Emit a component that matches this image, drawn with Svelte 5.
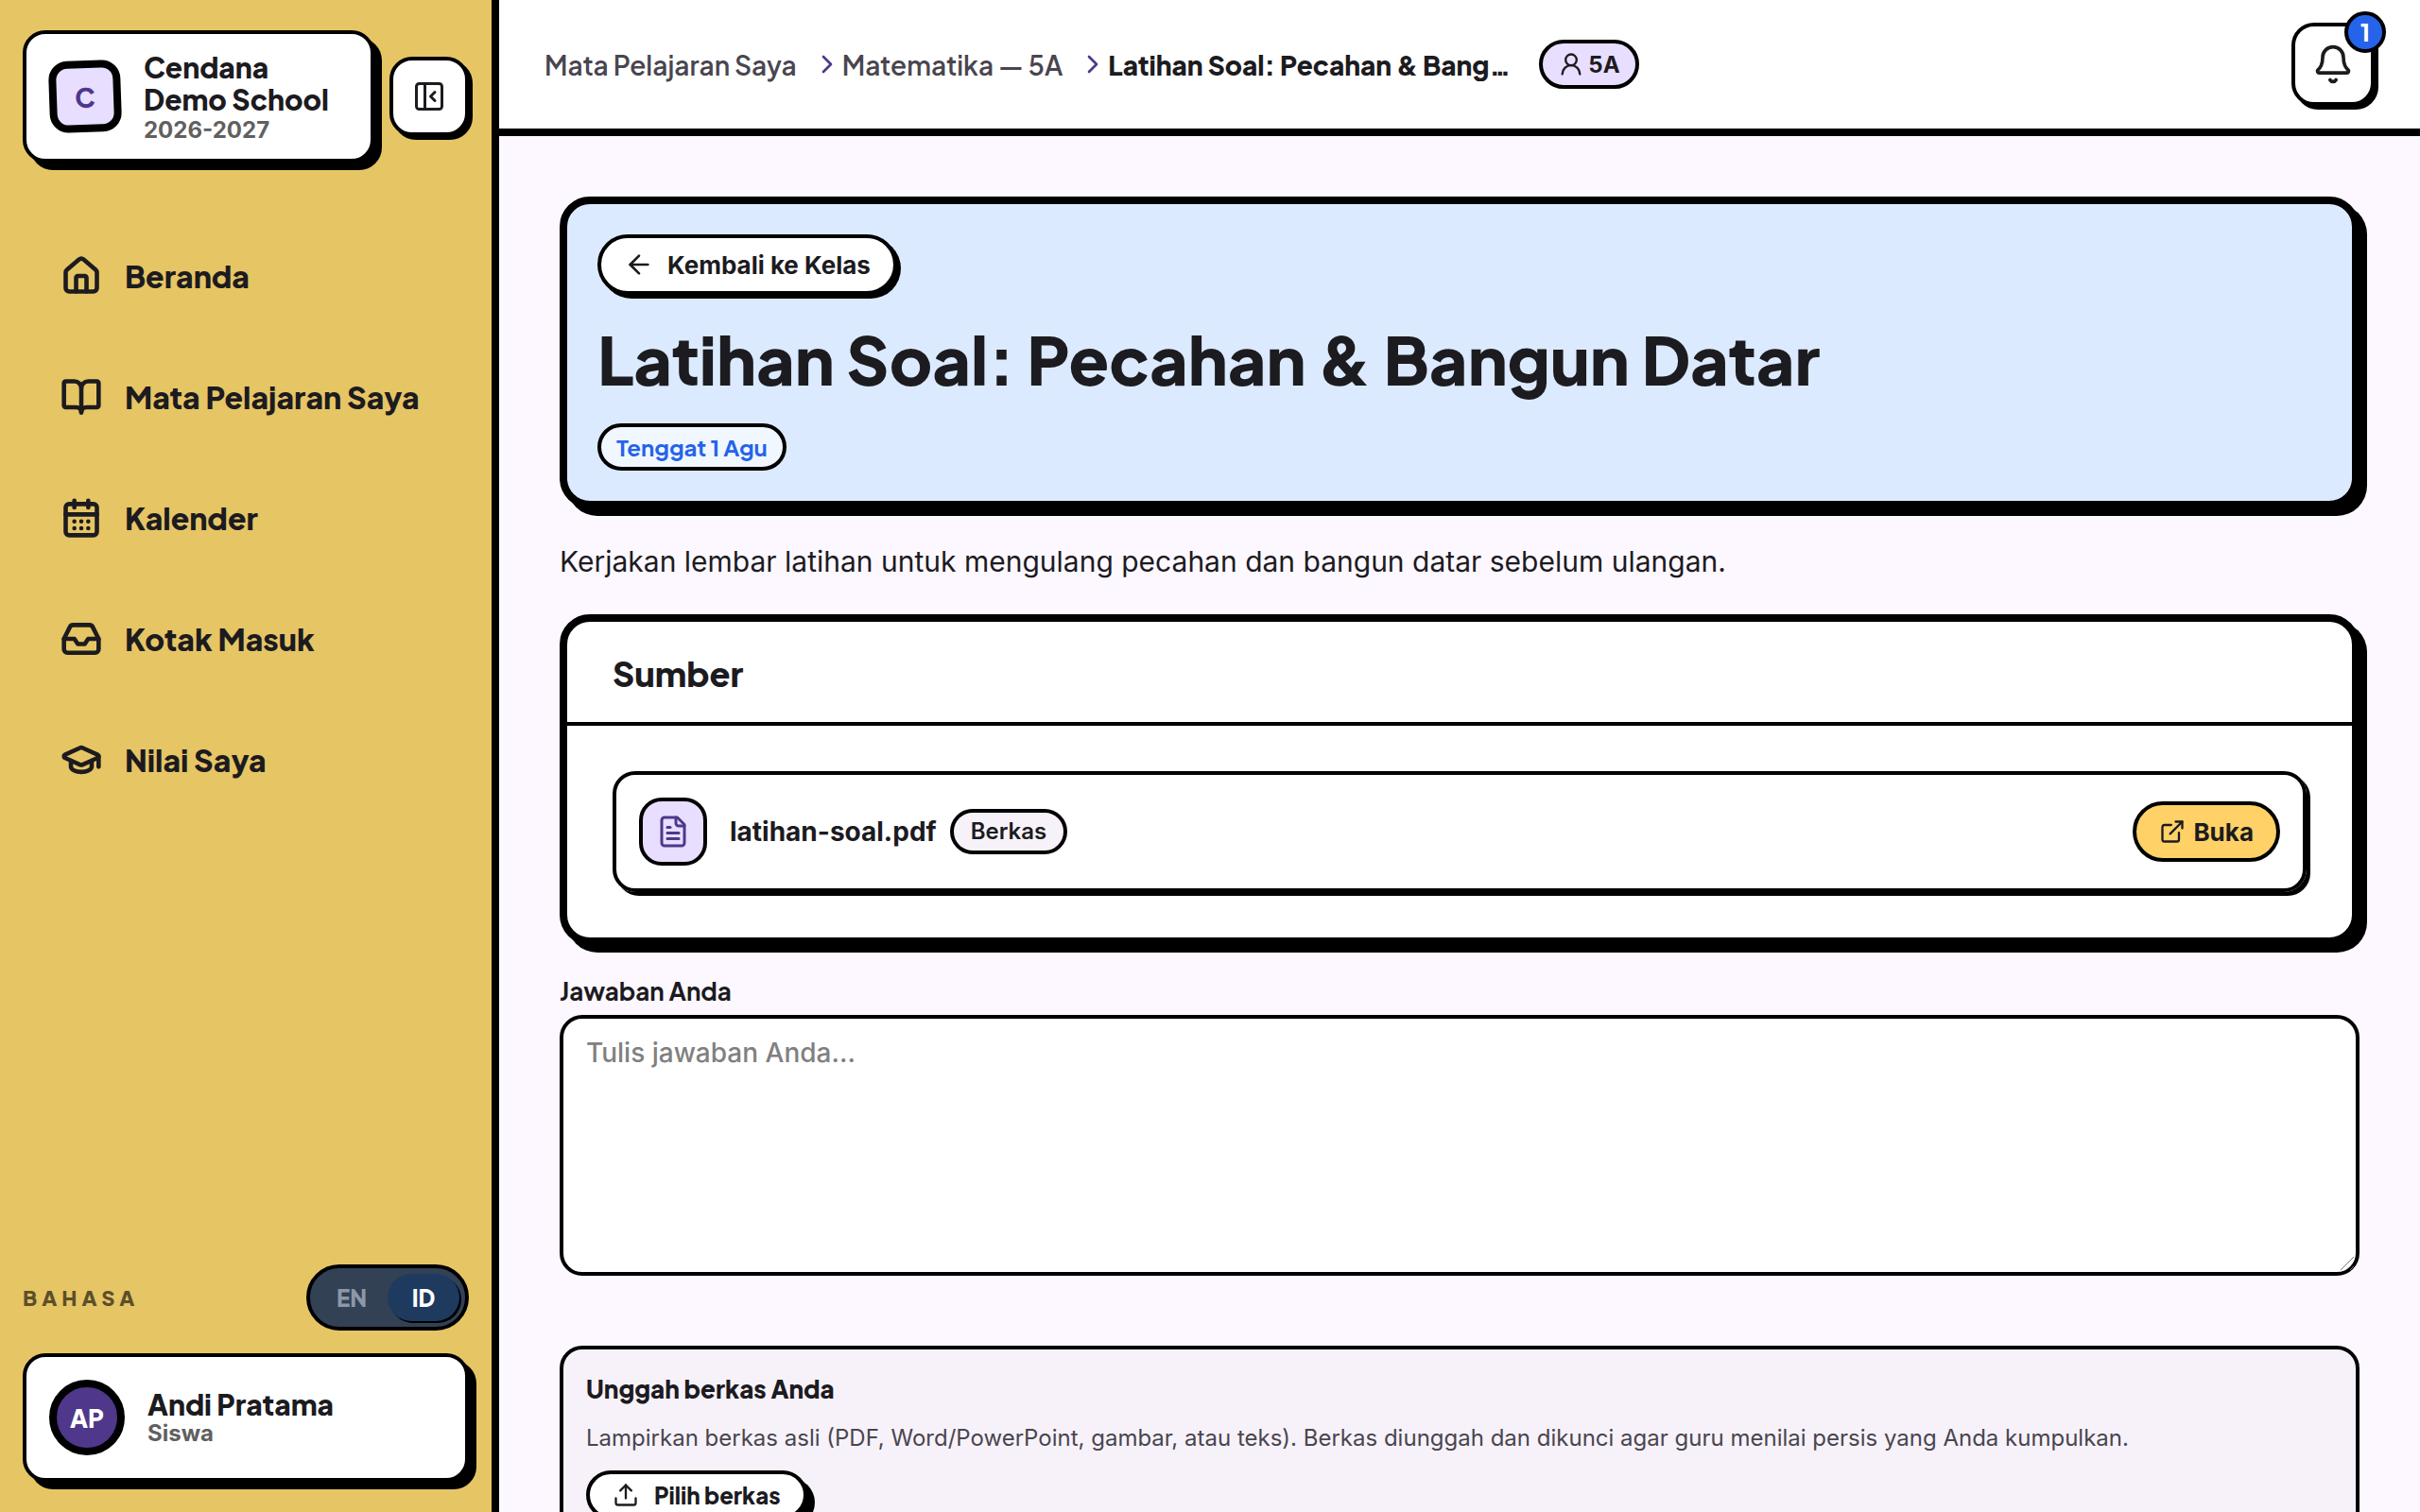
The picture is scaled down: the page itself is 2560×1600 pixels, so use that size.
<script lang="ts">
  type IconName = keyof typeof icons;

  const icons = {
    home: '<path d="M15 21v-8a1 1 0 0 0-1-1h-4a1 1 0 0 0-1 1v8"/><path d="M3 10a2 2 0 0 1 .709-1.528l7-5.999a2 2 0 0 1 2.582 0l7 5.999A2 2 0 0 1 21 10v9a2 2 0 0 1-2 2H5a2 2 0 0 1-2-2z"/>',
    book: '<path d="M12 7v14"/><path d="M3 18a1 1 0 0 1-1-1V4a1 1 0 0 1 1-1h5a4 4 0 0 1 4 4 4 4 0 0 1 4-4h5a1 1 0 0 1 1 1v13a1 1 0 0 1-1 1h-6a3 3 0 0 0-3 3 3 3 0 0 0-3-3z"/>',
    calendar: '<path d="M8 2v4"/><path d="M16 2v4"/><rect width="18" height="18" x="3" y="4" rx="2"/><path d="M3 10h18"/><path d="M8 14h.01"/><path d="M12 14h.01"/><path d="M16 14h.01"/><path d="M8 18h.01"/><path d="M12 18h.01"/><path d="M16 18h.01"/>',
    inbox: '<polyline points="22 12 16 12 14 15 10 15 8 12 2 12"/><path d="M5.45 5.11 2 12v6a2 2 0 0 0 2 2h16a2 2 0 0 0 2-2v-6l-3.45-6.89A2 2 0 0 0 16.76 4H7.24a2 2 0 0 0-1.79 1.11z"/>',
    grades: '<path d="M21.42 10.922a1 1 0 0 0-.019-1.838L12.83 5.18a2 2 0 0 0-1.66 0L2.6 9.08a1 1 0 0 0 0 1.832l8.57 3.908a2 2 0 0 0 1.66 0z"/><path d="M22 10v6"/><path d="M6 12.5V16a6 3 0 0 0 12 0v-3.5"/>',
    collapse: '<rect width="18" height="18" x="3" y="3" rx="2"/><path d="M9 3v18"/><path d="m16 15-3-3 3-3"/>',
    chevron: '<path d="m9 18 6-6-6-6"/>',
    user: '<circle cx="12" cy="8" r="5"/><path d="M20 21a8 8 0 0 0-16 0"/>',
    bell: '<path d="M10.268 21a2 2 0 0 0 3.464 0"/><path d="M3.262 15.326A1 1 0 0 0 4 17h16a1 1 0 0 0 .74-1.673C19.41 13.956 18 12.499 18 8A6 6 0 0 0 6 8c0 4.499-1.411 5.956-2.738 7.326"/>',
    back: '<path d="m12 19-7-7 7-7"/><path d="M19 12H5"/>',
    file: '<path d="M15 2H6a2 2 0 0 0-2 2v16a2 2 0 0 0 2 2h12a2 2 0 0 0 2-2V7Z"/><path d="M14 2v4a2 2 0 0 0 2 2h4"/><path d="M10 9H8"/><path d="M16 13H8"/><path d="M16 17H8"/>',
    external: '<path d="M15 3h6v6"/><path d="M10 14 21 3"/><path d="M18 13v6a2 2 0 0 1-2 2H5a2 2 0 0 1-2-2V8a2 2 0 0 1 2-2h6"/>',
    upload: '<path d="M12 3v12"/><path d="m17 8-5-5-5 5"/><path d="M21 15v4a2 2 0 0 1-2 2H5a2 2 0 0 1-2-2v-4"/>'
  };

  const nav: { label: string; icon: IconName }[] = [
    { label: 'Beranda', icon: 'home' },
    { label: 'Mata Pelajaran Saya', icon: 'book' },
    { label: 'Kalender', icon: 'calendar' },
    { label: 'Kotak Masuk', icon: 'inbox' },
    { label: 'Nilai Saya', icon: 'grades' }
  ];

  const title = 'Latihan Soal: Pecahan & Bangun Datar';

  let lang = $state('ID');
  let answer = $state('');
</script>

{#snippet icon(name: IconName, size: number, stroke = 2)}
  <svg
    width={size}
    height={size}
    viewBox="0 0 24 24"
    fill="none"
    stroke="currentColor"
    stroke-width={stroke}
    stroke-linecap="round"
    stroke-linejoin="round"
    aria-hidden="true"
  >
    {@html icons[name]}
  </svg>
{/snippet}

<div class="shell">
  <aside class="sidebar">
    <div class="top-row">
      <div class="brand">
        <span class="logo">C</span>
        <div>
          <div class="school">Cendana<br />Demo School</div>
          <div class="year">2026-2027</div>
        </div>
      </div>
      <button class="square collapse" aria-label="Ciutkan menu">{@render icon('collapse', 36)}</button>
    </div>

    <nav class="nav">
      {#each nav as item}
        <a href="#{item.icon}">
          {@render icon(item.icon, 44, 2.5)}
          <span>{item.label}</span>
        </a>
      {/each}
    </nav>

    <div class="language">
      <span class="language-label">BAHASA</span>
      <div class="toggle">
        {#each ['EN', 'ID'] as code}
          <button class:active={lang === code} onclick={() => (lang = code)}>{code}</button>
        {/each}
      </div>
    </div>

    <div class="profile">
      <span class="avatar">AP</span>
      <div>
        <div class="name">Andi Pratama</div>
        <div class="role">Siswa</div>
      </div>
    </div>
  </aside>

  <div class="page">
    <header class="topbar">
      <nav class="crumbs">
        <a href="#mapel">Mata Pelajaran Saya</a>
        {@render icon('chevron', 32)}
        <a href="#matematika">Matematika — 5A</a>
        {@render icon('chevron', 32)}
        <span class="current">{title}</span>
      </nav>
      <span class="class-badge">{@render icon('user', 28)}5A</span>
      <button class="square bell" aria-label="Notifikasi">
        {@render icon('bell', 44)}
        <span class="count">1</span>
      </button>
    </header>

    <main class="content">
      <section class="hero">
        <a class="pill-button" href="#kelas">{@render icon('back', 32)}Kembali ke Kelas</a>
        <h1>{title}</h1>
        <span class="due">Tenggat 1 Agu</span>
      </section>

      <p class="intro">Kerjakan lembar latihan untuk mengulang pecahan dan bangun datar sebelum ulangan.</p>

      <section class="card">
        <h2>Sumber</h2>
        <div class="card-body">
          <div class="resource">
            <span class="file-tile">{@render icon('file', 36)}</span>
            <span class="file-name">latihan-soal.pdf</span>
            <span class="file-type">Berkas</span>
            <a class="open" href="#buka">{@render icon('external', 28)}Buka</a>
          </div>
        </div>
      </section>

      <label class="answer-label" for="answer">Jawaban Anda</label>
      <div class="answer">
        <textarea id="answer" placeholder="Tulis jawaban Anda..." bind:value={answer}></textarea>
        <svg class="grip" width="20" height="20" viewBox="0 0 20 20" stroke="#777" aria-hidden="true">
          <path d="M4 18 18 4M14 18l4-4" />
        </svg>
      </div>

      <section class="upload">
        <h3>Unggah berkas Anda</h3>
        <p>Lampirkan berkas asli (PDF, Word/PowerPoint, gambar, atau teks). Berkas diunggah dan dikunci agar guru menilai persis yang Anda kumpulkan.</p>
        <button class="pill-button choose">{@render icon('upload', 28)}Pilih berkas</button>
      </section>
    </main>
  </div>
</div>

<style>
  :global(body) {
    margin: 0;
    background: #fdf8ff;
  }

  .shell {
    --ink: #1c1b1f;
    --display: "Plus Jakarta Sans", Inter, sans-serif;
    display: flex;
    height: 100vh;
    overflow: hidden;
    color: var(--ink);
    font-family: Inter, sans-serif;
    font-size: 28px;
  }

  .shell * {
    box-sizing: border-box;
  }

  .shell :global(svg) {
    display: block;
    flex: none;
  }

  a {
    color: inherit;
    text-decoration: none;
  }

  button {
    margin: 0;
    color: inherit;
    font-family: inherit;
    cursor: pointer;
  }

  h1, h2, h3, p {
    margin: 0;
  }

  /* sidebar */
  .sidebar {
    display: flex;
    flex: none;
    flex-direction: column;
    box-sizing: border-box;
    width: 528px;
    padding: 32px 24px;
    border-right: 8px solid #000;
    background: #e6c565;
    font-family: var(--display);
  }

  .top-row {
    display: flex;
    align-items: center;
    gap: 16px;
  }

  .brand,
  .profile {
    display: flex;
    align-items: center;
    gap: 24px;
    border: 4px solid #000;
    border-radius: 24px;
    background: #fff;
    box-shadow: 8px 8px 0 #000;
  }

  .brand {
    flex: 1;
    height: 140px;
    padding: 0 24px;
  }

  .logo {
    display: grid;
    place-items: center;
    flex: none;
    width: 76px;
    height: 76px;
    border: 8px solid #000;
    border-radius: 20px;
    background: #e8deff;
    color: #4f378b;
    font-size: 28px;
    font-weight: 800;
    transform: rotate(-2deg);
  }

  .school {
    padding-top: 4px;
    font-size: 30px;
    font-weight: 800;
    line-height: 34px;
    white-space: nowrap;
  }

  .year,
  .role {
    color: #606060;
    font-family: Inter, sans-serif;
    font-size: 24px;
    font-weight: 700;
    line-height: 32px;
  }

  .square {
    display: grid;
    place-items: center;
    flex: none;
    padding: 0;
    border: 4px solid #000;
    border-radius: 24px;
    background: #fff;
    box-shadow: 4px 4px 0 #000;
  }

  .collapse {
    width: 84px;
    height: 84px;
  }

  .nav {
    display: flex;
    flex: 1;
    flex-direction: column;
    gap: 32px;
    padding-top: 72px;
  }

  .nav a {
    display: flex;
    align-items: center;
    gap: 24px;
    height: 96px;
    padding: 0 40px;
    font-size: 32px;
    font-weight: 800;
    white-space: nowrap;
  }

  .language {
    display: flex;
    align-items: center;
    justify-content: space-between;
    margin-bottom: 24px;
  }

  .language-label {
    color: #5c4f2a;
    font-size: 22px;
    font-weight: 800;
    letter-spacing: 5px;
  }

  .toggle {
    display: flex;
    padding: 6px;
    border: 4px solid #000;
    border-radius: 36px;
    background: #334155;
  }

  .toggle button {
    width: 76px;
    height: 50px;
    padding: 0;
    border: 0;
    border-radius: 25px;
    background: none;
    color: #8b98a9;
    font-size: 24px;
    font-weight: 800;
  }

  .toggle .active {
    background: #1e3a5f;
    box-shadow: 2px 2px 0 #000;
    color: #fff;
  }

  .profile {
    padding: 24px;
  }

  .avatar {
    display: grid;
    place-items: center;
    width: 80px;
    height: 80px;
    border: 8px solid #000;
    border-radius: 50%;
    background: #4f378b;
    color: #fff;
    font-size: 26px;
    font-weight: 800;
  }

  .name {
    font-size: 30px;
    font-weight: 800;
    line-height: 34px;
  }

  .role {
    line-height: 28px;
  }

  /* top bar */
  .page {
    flex: 1;
    min-width: 0;
  }

  .topbar {
    display: flex;
    align-items: center;
    height: 144px;
    padding: 0 48px;
    border-bottom: 8px solid #000;
    background: #fff;
  }

  .crumbs {
    display: flex;
    align-items: center;
    color: #49454f;
    font-family: var(--display);
    font-size: 28px;
    font-weight: 600;
    white-space: nowrap;
  }

  .crumbs :global(svg) {
    color: #4f378b;
  }

  .crumbs a {
    margin-right: 16px;
  }

  .current {
    max-width: 430px;
    overflow: hidden;
    color: var(--ink);
    font-weight: 800;
    text-overflow: ellipsis;
  }

  .class-badge {
    display: flex;
    align-items: center;
    gap: 4px;
    height: 52px;
    margin: 0 auto 0 26px;
    padding: 0 16px;
    border: 4px solid #000;
    border-radius: 26px;
    background: #e8deff;
    font-size: 24px;
    font-weight: 700;
  }

  .bell {
    position: relative;
    width: 88px;
    height: 88px;
  }

  .count {
    position: absolute;
    top: -16px;
    right: -16px;
    display: grid;
    place-items: center;
    width: 44px;
    height: 44px;
    border: 4px solid #000;
    border-radius: 50%;
    background: #2563eb;
    color: #fff;
    font-family: var(--display);
    font-size: 24px;
    font-weight: 800;
  }

  /* content */
  .content {
    padding: 64px;
  }

  .hero {
    display: flex;
    flex-direction: column;
    align-items: flex-start;
    padding: 32px;
    border: 8px solid #000;
    border-radius: 32px;
    background: #dbeafe;
    box-shadow: 8px 8px 0 #000;
  }

  .pill-button {
    display: inline-flex;
    align-items: center;
    gap: 14px;
    height: 64px;
    padding: 0 24px;
    border: 4px solid #000;
    border-radius: 32px;
    background: #fff;
    box-shadow: 4px 4px 0 #000;
    font-size: 26px;
    font-weight: 700;
  }

  h1 {
    margin: 26px 0;
    font-family: var(--display);
    font-size: 70px;
    font-weight: 800;
    line-height: 84px;
  }

  .due {
    padding: 0 16px;
    border: 4px solid #000;
    border-radius: 25px;
    background: #f1f7ff;
    color: #2563eb;
    font-family: var(--display);
    font-size: 24px;
    font-weight: 700;
    line-height: 42px;
  }

  .intro {
    margin: 30px 0;
    font-size: 30px;
    line-height: 52px;
  }

  .card {
    border: 8px solid #000;
    border-radius: 32px;
    background: #fff;
    box-shadow: 8px 8px 0 #000;
  }

  h2 {
    padding: 30px 48px 26px;
    border-bottom: 4px solid #000;
    font-family: var(--display);
    font-size: 36px;
    font-weight: 800;
    line-height: 50px;
  }

  .card-body {
    padding: 48px;
  }

  .resource {
    display: flex;
    align-items: center;
    padding: 24px;
    border: 4px solid #000;
    border-radius: 24px;
    box-shadow: 4px 4px 0 #000;
  }

  .file-tile {
    display: grid;
    place-items: center;
    width: 72px;
    height: 72px;
    border: 4px solid #000;
    border-radius: 24px;
    background: #e8deff;
    color: #4f378b;
  }

  .file-name {
    margin: 0 14px 0 24px;
    font-size: 28px;
    font-weight: 700;
  }

  .file-type {
    padding: 0 18px;
    border: 4px solid #000;
    border-radius: 24px;
    background: #f7f2fa;
    font-size: 24px;
    font-weight: 600;
    line-height: 40px;
  }

  .open {
    display: flex;
    align-items: center;
    gap: 8px;
    height: 64px;
    margin-left: auto;
    padding: 0 24px;
    border: 4px solid #000;
    border-radius: 32px;
    background: #ffd166;
    font-size: 26px;
    font-weight: 700;
  }

  .answer-label {
    display: block;
    margin: 32px 0 8px;
    font-family: var(--display);
    font-size: 26px;
    font-weight: 700;
    line-height: 34px;
  }

  .answer {
    position: relative;
  }

  .grip {
    position: absolute;
    right: 4px;
    bottom: 4px;
    pointer-events: none;
  }

  textarea {
    display: block;
    width: 100%;
    height: 276px;
    margin: 0;
    padding: 16px 24px;
    border: 4px solid #000;
    border-radius: 24px;
    background: #fff;
    color: var(--ink);
    font-family: inherit;
    font-size: 28px;
    font-weight: 500;
    line-height: 40px;
    resize: none;
  }

  textarea::placeholder {
    color: #808080;
  }

  .upload {
    margin-top: 74px;
    padding: 24px;
    border: 4px solid #000;
    border-radius: 24px;
    background: #f7f2fa;
  }

  h3 {
    font-family: var(--display);
    font-size: 26px;
    font-weight: 800;
    line-height: 36px;
  }

  .upload p {
    margin: 14px 0;
    color: #49454f;
    font-size: 24px;
    line-height: 40px;
  }

  .choose {
    gap: 16px;
    height: 52px;
    box-shadow: 8px 8px 0 #000;
    font-family: var(--display);
    font-size: 24px;
    font-weight: 800;
  }
</style>
